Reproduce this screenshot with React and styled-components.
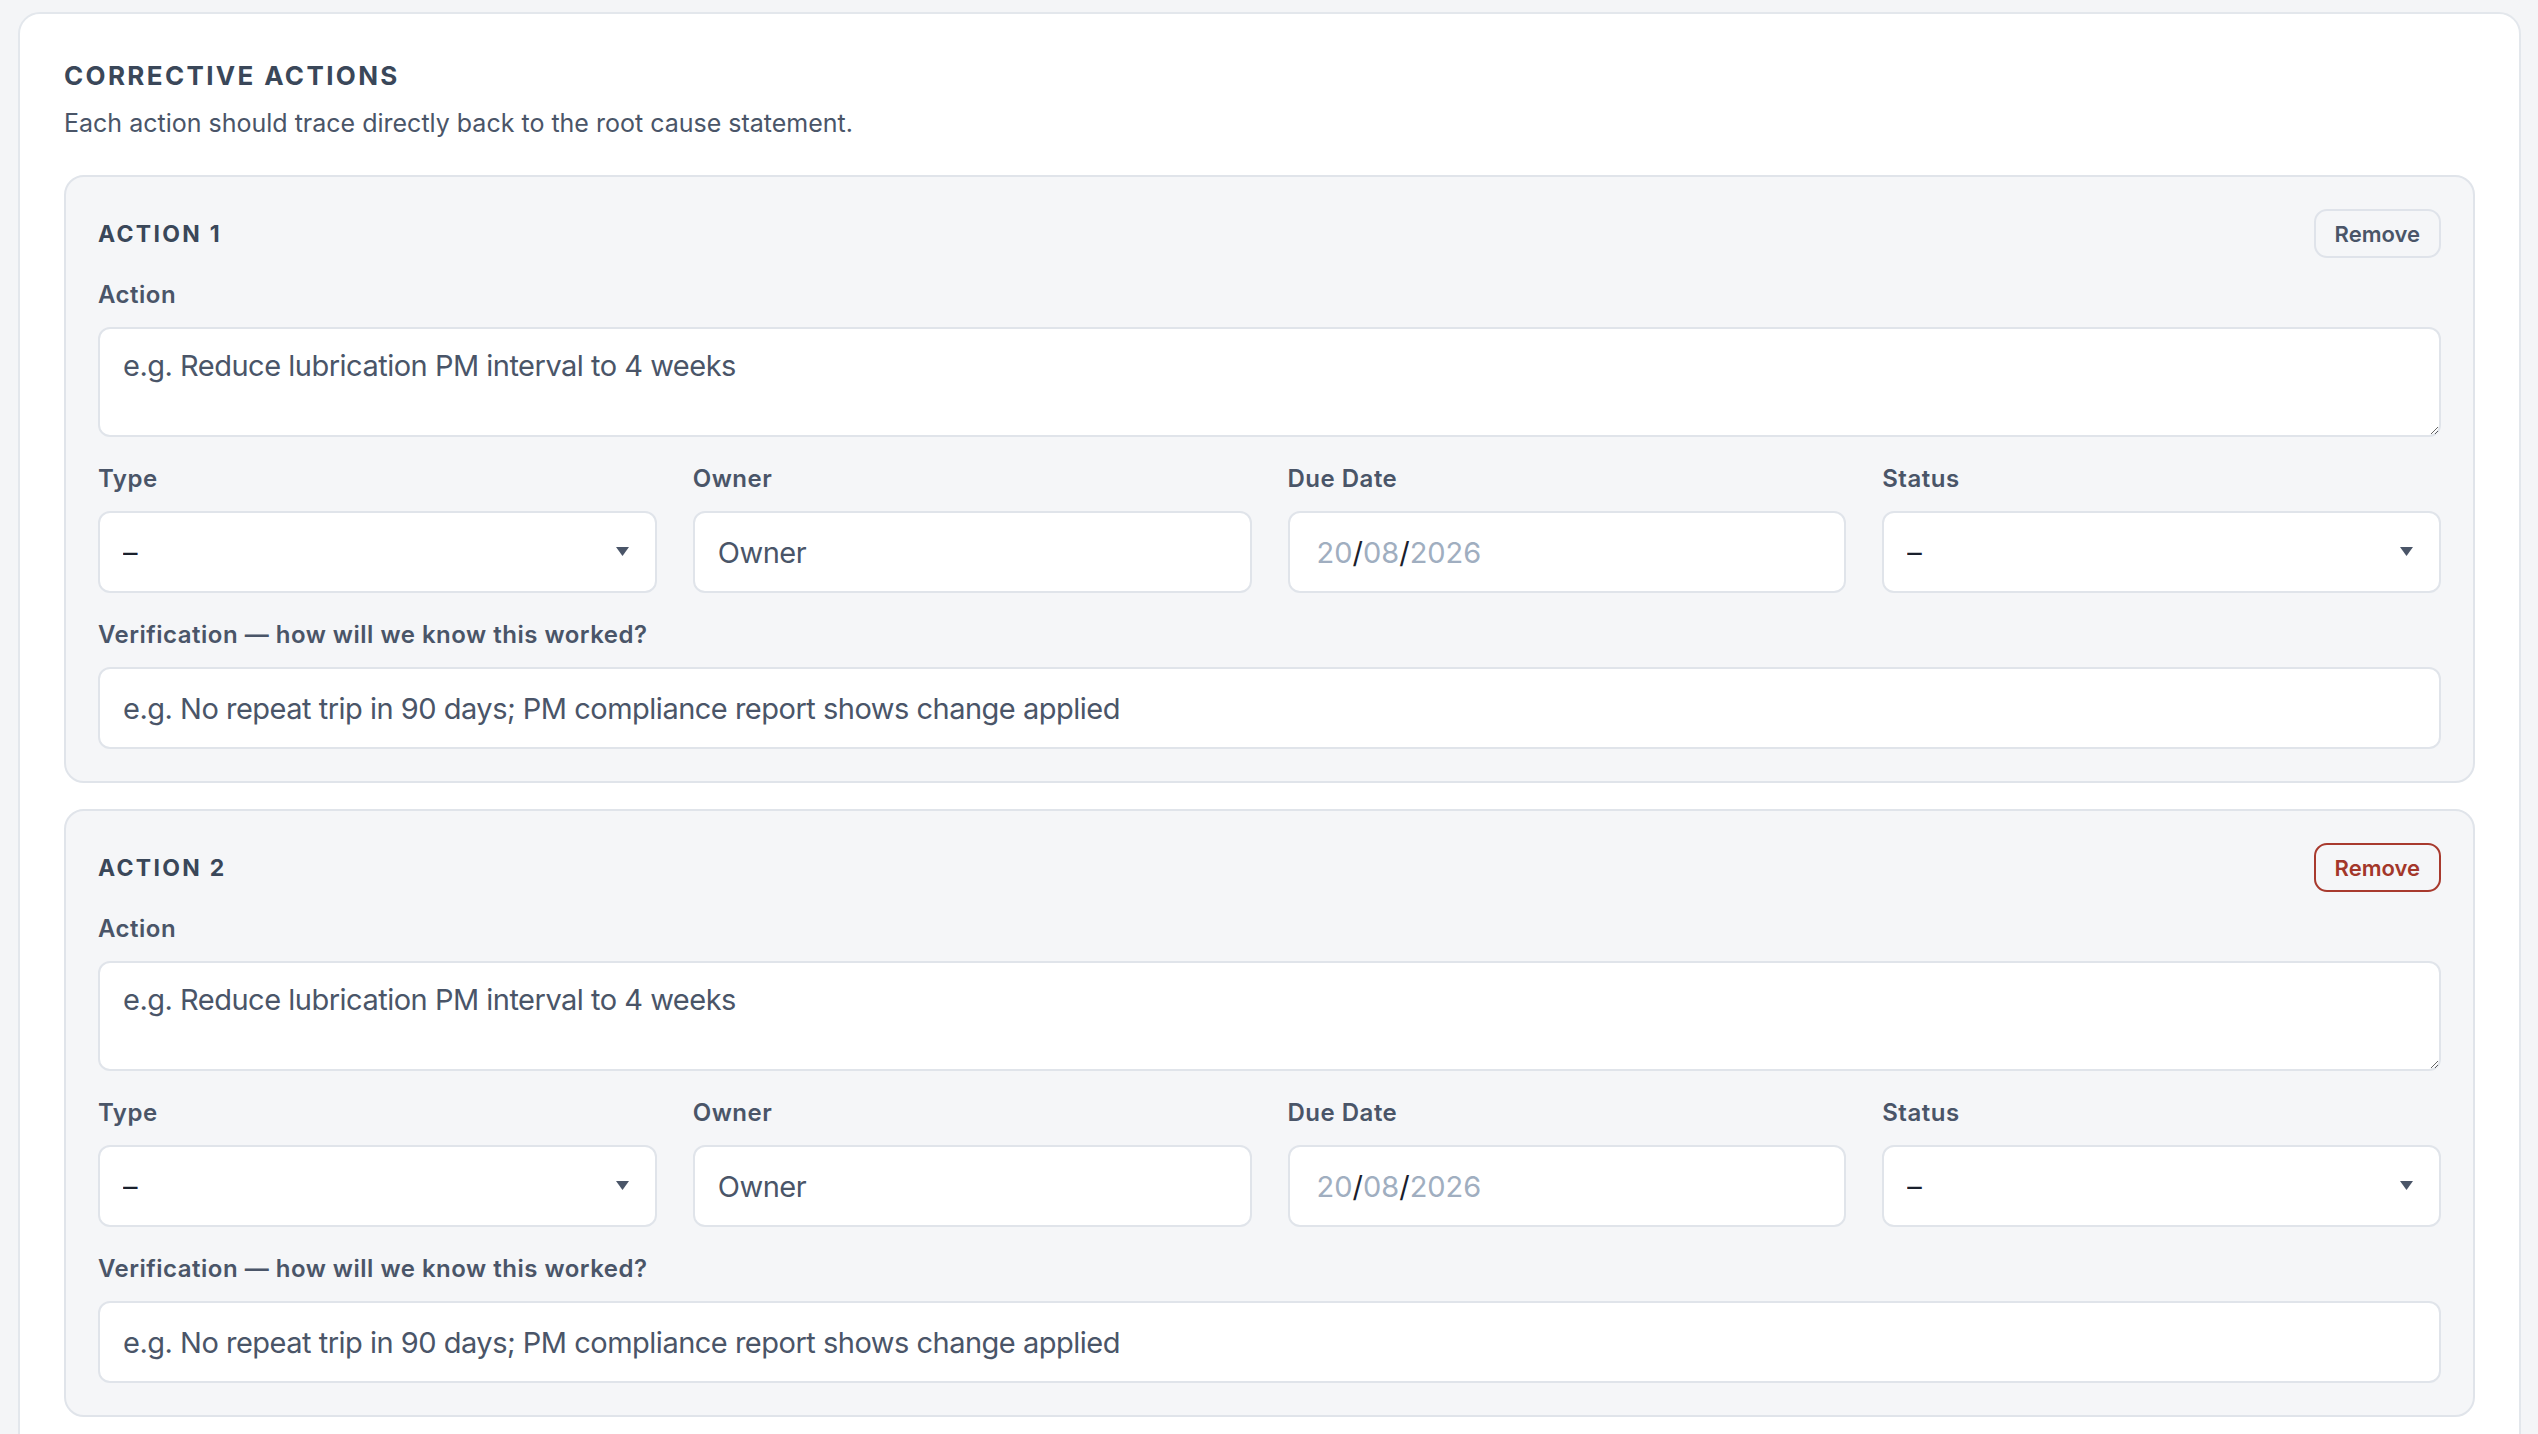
import React from "react";
import styled, { createGlobalStyle } from "styled-components";

const GlobalStyle = createGlobalStyle`
  html, body {
    margin: 0;
    padding: 0;
    background: #f4f5f7;
  }
  body {
    font-family: Inter, "Noto Sans", "Liberation Sans", sans-serif;
    -webkit-font-smoothing: antialiased;
  }
  * { box-sizing: border-box; }
`;

const Page = styled.div`
  padding: 12px 17px 0 18px;
  min-height: 1434px;
`;

const Section = styled.section`
  background: #ffffff;
  border: 2px solid #e3e7ec;
  border-radius: 22px;
  padding: 45px 44px 40px;
`;

const SectionTitle = styled.h2`
  margin: 0;
  font-size: 26px;
  line-height: 34px;
  font-weight: 700;
  letter-spacing: 0.09em;
  text-transform: uppercase;
  color: #3a4759;
`;

const SectionHint = styled.p`
  margin: 12px 0 0;
  font-size: 25px;
  line-height: 36px;
  color: #4a5568;
`;

const ActionList = styled.div`
  margin-top: 34px;
  display: flex;
  flex-direction: column;
  gap: 26px;
`;

const ActionCard = styled.div`
  background: #f5f6f8;
  border: 2px solid #e0e4ea;
  border-radius: 20px;
  padding: 32px;
`;

const CardHeader = styled.div`
  display: flex;
  align-items: center;
  justify-content: space-between;
  height: 49px;
  margin-bottom: 19px;
`;

const CardTitle = styled.h3`
  margin: 0;
  font-size: 23px;
  font-weight: 700;
  letter-spacing: 0.1em;
  text-transform: uppercase;
  color: #3a4759;
`;

const RemoveButton = styled.button`
  height: 49px;
  padding: 0 19px;
  border-radius: 13px;
  background: transparent;
  font-family: inherit;
  font-size: 22px;
  font-weight: 600;
  cursor: pointer;
  border: 2px solid ${(p) => (p.$danger ? "#a83a2e" : "#dfe3ea")};
  color: ${(p) => (p.$danger ? "#a3372a" : "#4a5568")};
`;

const CardBody = styled.div`
  display: flex;
  flex-direction: column;
  gap: 24px;
`;

const FieldRow = styled.div`
  display: grid;
  grid-template-columns: repeat(4, 1fr);
  column-gap: 36px;
`;

const Field = styled.label`
  display: flex;
  flex-direction: column;
  gap: 14px;
  min-width: 0;
`;

const FieldLabel = styled.span`
  font-size: 24px;
  line-height: 36px;
  font-weight: 600;
  letter-spacing: 0.5px;
  color: #4a5568;
`;

const controlBase = `
  width: 100%;
  background: #ffffff;
  border: 2px solid #e0e4ea;
  border-radius: 12px;
  font-family: Inter, "Noto Sans", "Liberation Sans", sans-serif;
  font-size: 29px;
  letter-spacing: -0.5px;
  color: #4a5568;
  outline: none;
`;

const TextArea = styled.textarea`
  ${controlBase}
  display: block;
  height: 110px;
  padding: 15px 23px 10px;
  line-height: 44px;
  resize: vertical;
  &::placeholder { color: #4a5568; opacity: 1; }
`;

const TextInput = styled.input`
  ${controlBase}
  height: 82px;
  padding: 0 23px;
  &::placeholder { color: #4a5568; opacity: 1; }
`;

const SelectWrap = styled.div`
  position: relative;
`;

const Select = styled.select`
  ${controlBase}
  height: 82px;
  padding: 0 60px 0 23px;
  appearance: none;
  -webkit-appearance: none;
  color: #1a202c;
`;

const SelectArrow = styled.svg`
  position: absolute;
  right: 28px;
  top: 50%;
  width: 13px;
  height: 9px;
  margin-top: -5px;
  pointer-events: none;
`;

const DateBox = styled.div`
  ${controlBase}
  letter-spacing: 0;
  height: 82px;
  padding: 0 27px;
  display: flex;
  align-items: center;
`;

const DatePart = styled.span`
  color: ${(p) => (p.$sep ? "#1a202c" : "#a0aec0")};
`;

function ActionBlock({ index, danger }) {
  return (
    <ActionCard>
      <CardHeader>
        <CardTitle>Action {index}</CardTitle>
        <RemoveButton type="button" $danger={danger}>
          Remove
        </RemoveButton>
      </CardHeader>
      <CardBody>
        <Field>
          <FieldLabel>Action</FieldLabel>
          <TextArea placeholder="e.g. Reduce lubrication PM interval to 4 weeks" />
        </Field>
        <FieldRow>
          <Field>
            <FieldLabel>Type</FieldLabel>
            <SelectWrap>
              <Select defaultValue="">
                <option value="">–</option>
              </Select>
              <SelectArrow viewBox="0 0 13 9">
                <polygon points="0,0 13,0 6.5,9" fill="#4a5568" />
              </SelectArrow>
            </SelectWrap>
          </Field>
          <Field>
            <FieldLabel>Owner</FieldLabel>
            <TextInput placeholder="Owner" />
          </Field>
          <Field>
            <FieldLabel>Due Date</FieldLabel>
            <DateBox>
              <DatePart>20</DatePart>
              <DatePart $sep>/</DatePart>
              <DatePart>08</DatePart>
              <DatePart $sep>/</DatePart>
              <DatePart>2026</DatePart>
            </DateBox>
          </Field>
          <Field>
            <FieldLabel>Status</FieldLabel>
            <SelectWrap>
              <Select defaultValue="">
                <option value="">–</option>
              </Select>
              <SelectArrow viewBox="0 0 13 9">
                <polygon points="0,0 13,0 6.5,9" fill="#4a5568" />
              </SelectArrow>
            </SelectWrap>
          </Field>
        </FieldRow>
        <Field>
          <FieldLabel>Verification — how will we know this worked?</FieldLabel>
          <TextInput placeholder="e.g. No repeat trip in 90 days; PM compliance report shows change applied" />
        </Field>
      </CardBody>
    </ActionCard>
  );
}

export default function App() {
  return (
    <>
      <GlobalStyle />
      <Page>
        <Section>
          <SectionTitle>Corrective Actions</SectionTitle>
          <SectionHint>
            Each action should trace directly back to the root cause statement.
          </SectionHint>
          <ActionList>
            <ActionBlock index={1} />
            <ActionBlock index={2} danger />
          </ActionList>
        </Section>
      </Page>
    </>
  );
}
